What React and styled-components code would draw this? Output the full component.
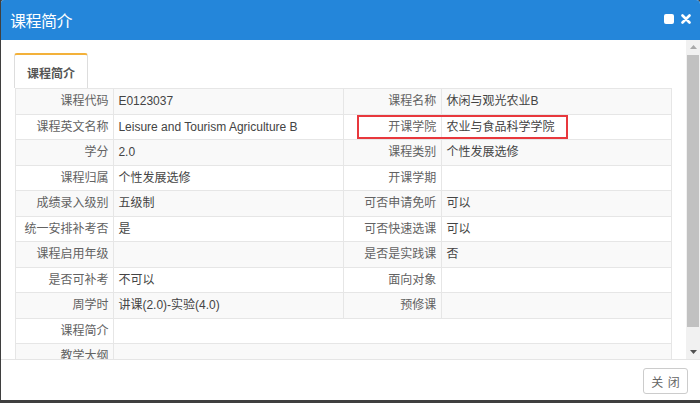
import React from "react";
import styled, { createGlobalStyle } from "styled-components";

const Global = createGlobalStyle`
  html, body { margin: 0; padding: 0; }
  body {
    background: #3f3f3f;
    width: 700px;
    height: 403px;
    overflow: hidden;
    font-family: "Liberation Sans", "Noto Sans CJK SC", sans-serif;
  }
`;

const Dialog = styled.div`
  margin-left: 1px;
  width: 699px;
  height: 400px;
  background: #fff;
  border-radius: 3px 4px 0 0;
  display: flex;
  flex-direction: column;
  overflow: hidden;
`;

const Header = styled.div`
  height: 40px;
  flex: none;
  background: #2486da;
  display: flex;
  align-items: center;
  justify-content: space-between;
  padding: 0 9px 0 9px;
  box-sizing: border-box;
`;

const Title = styled.div`
  color: #fff;
  font-size: 16px;
  font-family: "Noto Sans CJK SC", sans-serif;
  letter-spacing: -0.5px;
  margin-top: -1px;
`;

const Tools = styled.div`
  display: flex;
  align-items: center;
  gap: 7px;
  margin-top: -3px;
`;

const MaxIcon = styled.span`
  width: 10px;
  height: 10px;
  background: #fff;
  border-radius: 2px;
  display: block;
`;

const Body = styled.div`
  flex: 1;
  display: flex;
  min-height: 0;
`;

const Scroller = styled.div`
  flex: 1;
  overflow: hidden;
  padding: 13px 14px 0 14px;
`;

const TabStrip = styled.div`
  display: flex;
`;

const Tab = styled.div`
  margin-left: -1px;
  width: 74px;
  height: 35px;
  box-sizing: border-box;
  border: 1px solid #ddd;
  border-top: 2px solid #f3b13a;
  border-bottom: none;
  border-radius: 3px 3px 0 0;
  display: flex;
  align-items: center;
  justify-content: center;
  font-family: "Noto Sans CJK SC", sans-serif;
  font-weight: bold;
  font-size: 12px;
  color: #555;
  padding-top: 2px;
`;

const TableWrap = styled.div`
  position: relative;
`;

const Table = styled.table`
  width: 657px;
  border-collapse: collapse;
  table-layout: fixed;
  font-size: 12px;
`;

const Row = styled.tr`
  background: ${(p) => (p.$striped ? "#f9f9f9" : "#fff")};
`;

const Label = styled.td`
  border: 1px solid #e6e6e6;
  padding: 4px 5px 4px 5px;
  line-height: 16.5px;
  text-align: right;
  color: #626262;
  white-space: nowrap;
`;

const Value = styled.td`
  border: 1px solid #e6e6e6;
  padding: 4px 4px;
  line-height: 16.5px;
  text-align: left;
  color: #444;
  white-space: nowrap;
`;

const Highlight = styled.div`
  position: absolute;
  left: 342px;
  top: 27px;
  width: 211px;
  height: 24px;
  box-sizing: border-box;
  border: 2px solid #e8383d;
  pointer-events: none;
`;

const ScrollBar = styled.div`
  width: 14px;
  flex: none;
  background: #f1f1f1;
  display: flex;
  flex-direction: column;
  align-items: center;
`;

const Arrow = styled.div`
  height: 14px;
  width: 14px;
  display: flex;
  align-items: center;
  justify-content: center;
  flex: none;
`;

const Thumb = styled.div`
  width: 12px;
  margin-left: 1px;
  align-self: flex-start;
  height: 272px;
  margin-top: 1px;
  background: #c1c1c1;
`;

const Spacer = styled.div`
  flex: 1;
`;

const Footer = styled.div`
  height: 41px;
  flex: none;
  border-top: 1px solid #e5e5e5;
  box-sizing: border-box;
  display: flex;
  justify-content: flex-end;
  padding: 8px 12px 0 0;
`;

const Button = styled.button`
  width: 45px;
  height: 26px;
  background: #fff;
  border: 1px solid #ccc;
  border-radius: 3px;
  color: #666;
  font-size: 12px;
  font-family: "Noto Sans CJK SC", sans-serif;
  padding: 0;
  word-spacing: 2px;
`;

const rows = [
  ["课程代码", "E0123037", "课程名称", "休闲与观光农业B"],
  ["课程英文名称", "Leisure and Tourism Agriculture B", "开课学院", "农业与食品科学学院"],
  ["学分", "2.0", "课程类别", "个性发展选修"],
  ["课程归属", "个性发展选修", "开课学期", ""],
  ["成绩录入级别", "五级制", "可否申请免听", "可以"],
  ["统一安排补考否", "是", "可否快速选课", "可以"],
  ["课程启用年级", "", "是否是实践课", "否"],
  ["是否可补考", "不可以", "面向对象", ""],
  ["周学时", "讲课(2.0)-实验(4.0)", "预修课", ""],
];

const wide = ["课程简介", "教学大纲"];

export default function App() {
  return (
    <>
      <Global />
      <Dialog>
        <Header>
          <Title>课程简介</Title>
          <Tools>
            <MaxIcon />
            <svg width="10" height="10" viewBox="0 0 10 10">
              <path d="M1.5 1.5 L8.5 8.5 M8.5 1.5 L1.5 8.5" stroke="#fff" strokeWidth="2.6" strokeLinecap="round" />
            </svg>
          </Tools>
        </Header>
        <Body>
          <Scroller>
            <TabStrip>
              <Tab>课程简介</Tab>
            </TabStrip>
            <TableWrap>
              <Table>
                <colgroup>
                  <col style={{ width: "15%" }} />
                  <col style={{ width: "35%" }} />
                  <col style={{ width: "15%" }} />
                  <col style={{ width: "35%" }} />
                </colgroup>
                <tbody>
                  {rows.map((r, i) => (
                    <Row key={i} $striped={i % 2 === 0}>
                      <Label>{r[0]}</Label>
                      <Value>{r[1]}</Value>
                      <Label>{r[2]}</Label>
                      <Value>{r[3]}</Value>
                    </Row>
                  ))}
                  {wide.map((l, i) => (
                    <Row key={l} $striped={(rows.length + i) % 2 === 0}>
                      <Label>{l}</Label>
                      <Value colSpan={3}></Value>
                    </Row>
                  ))}
                </tbody>
              </Table>
              <Highlight />
            </TableWrap>
          </Scroller>
          <ScrollBar>
            <Arrow>
              <svg width="7" height="4" viewBox="0 0 7 4">
                <path d="M0 4 L3.5 0 L7 4 Z" fill="#a8a8a8" />
              </svg>
            </Arrow>
            <Thumb />
            <Spacer />
            <Arrow>
              <svg width="7" height="4" viewBox="0 0 7 4">
                <path d="M0 0 L3.5 4 L7 0 Z" fill="#505050" />
              </svg>
            </Arrow>
          </ScrollBar>
        </Body>
        <Footer>
          <Button>关 闭</Button>
        </Footer>
      </Dialog>
    </>
  );
}
